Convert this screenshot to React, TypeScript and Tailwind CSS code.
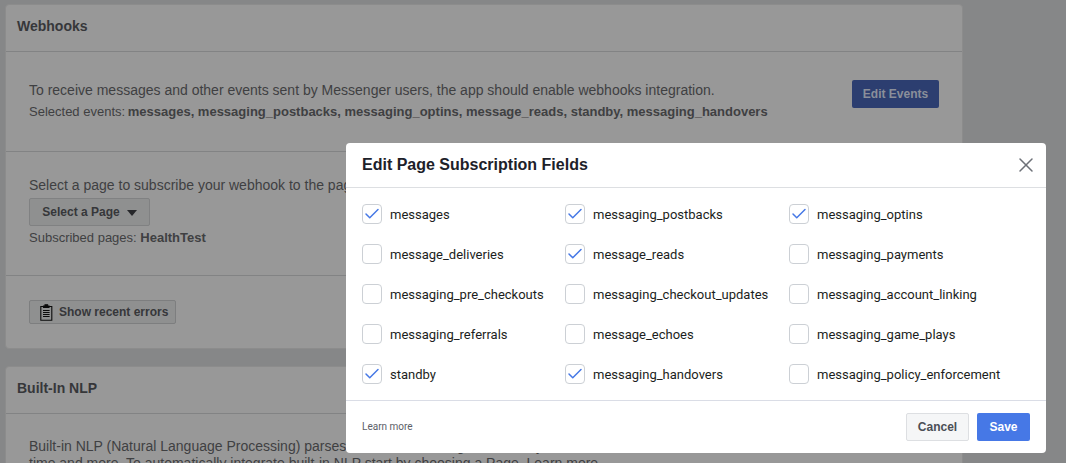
import { Check, X } from "lucide-react";

const fields = [
  { name: "messages", checked: true },
  { name: "messaging_postbacks", checked: true },
  { name: "messaging_optins", checked: true },
  { name: "message_deliveries", checked: false },
  { name: "message_reads", checked: true },
  { name: "messaging_payments", checked: false },
  { name: "messaging_pre_checkouts", checked: false },
  { name: "messaging_checkout_updates", checked: false },
  { name: "messaging_account_linking", checked: false },
  { name: "messaging_referrals", checked: false },
  { name: "message_echoes", checked: false },
  { name: "messaging_game_plays", checked: false },
  { name: "standby", checked: true },
  { name: "messaging_handovers", checked: true },
  { name: "messaging_policy_enforcement", checked: false },
];

function ClipboardIcon() {
  return (
    <svg width="13" height="17" viewBox="0 0 13 17" fill="none" stroke="#0b0b0b" strokeWidth="1.1">
      <path d="M3.5 2.5H.8v13.7h11V2.5H9" />
      <path d="M3.5 3.5V2H5V.8h2.6V2H9v1.5z" fill="#0b0b0b" />
      <path d="M3 6.5h6.6M3 8.5h6.6M3 10.5h6.6M3 12.5h6.6" />
    </svg>
  );
}

function App() {
  return (
    <div className="relative h-[463px] w-[1066px] overflow-hidden bg-[#868788] font-['Liberation_Sans',Arial,sans-serif]">
      <div className="flex flex-col gap-[17px] pl-[5px] pt-[4px] w-[963px]">
        {/* WEBHOOKS */}
        <div className="rounded-[4px] border border-[#8c8c8c] bg-[#989898] text-[#3f4042]">
          <div className="flex h-[47px] items-center border-b border-[#828384] pb-[4px] pl-[11px] text-[14px] font-bold text-[#36373a]">
            Webhooks
          </div>
          <div className="flex h-[100px] items-center justify-between border-b border-[#828384] pl-[23px] pr-[23px]">
            <div className="pb-[2px]">
              <p className="text-[14px] leading-[21px]">
                To receive messages and other events sent by Messenger users, the app should enable webhooks integration.
              </p>
              <p className="text-[13px] leading-[21px]">
                Selected events:{" "}
                <span className="-ml-[1px] font-bold">
                  messages, messaging_postbacks, messaging_optins, message_reads, standby, messaging_handovers
                </span>
              </p>
            </div>
            <button className="mb-[15px] h-[28px] w-[87px] rounded-[2px] bg-[#2c3e70] text-[12px] font-bold text-[#8a8f9a]">
              Edit Events
            </button>
          </div>
          <div className="flex h-[124px] flex-col items-start border-b border-[#828384] pl-[23px] pt-[23px]">
            <p className="text-[14px] leading-[20px]">Select a page to subscribe your webhook to the page events</p>
            <button className="mt-[3px] flex h-[28px] w-[121px] items-center justify-center gap-[7px] rounded-[2px] border border-[#808182] bg-[#8f9090] text-[12px] font-bold text-[#36373a]">
              Select a Page
              <span className="mt-[1px] h-0 w-0 border-x-[5.5px] border-t-[6px] border-x-transparent border-t-[#26272a]" />
            </button>
            <p className="mt-[3px] text-[13px] leading-[18px]">
              Subscribed pages: <span className="font-bold">HealthTest</span>
            </p>
          </div>
          <div className="h-[72px] pl-[23px] pt-[24px]">
            <button className="flex h-[24px] w-[147px] items-center gap-[6px] rounded-[2px] border border-[#7d7e7f] bg-[#8f9090] pl-[10px] text-[12px] font-bold text-[#36373a]">
              <ClipboardIcon />
              Show recent errors
            </button>
          </div>
        </div>

        {/* BUILT-IN NLP */}
        <div className="h-[200px] rounded-[4px] border border-[#8c8c8c] bg-[#989898] text-[#3f4042]">
          <div className="flex h-[47px] items-center border-b border-[#828384] pb-[4px] pl-[11px] text-[14px] font-bold text-[#36373a]">
            Built-In NLP
          </div>
          <div className="pl-[23px] pt-[24px] text-[14px] leading-[17px]">
            <p className="whitespace-nowrap">
              Built-in NLP (Natural Language Processing) parses the text of messages to identify entities such as dates,
            </p>
            <p className="whitespace-nowrap">
              time and more. To automatically integrate built-in NLP start by choosing a Page. Learn more
            </p>
          </div>
        </div>
      </div>

      {/* MODAL */}
      <div className="absolute left-[346px] top-[143px] flex h-[310px] w-[700px] flex-col rounded-[4px] bg-white font-['Roboto',sans-serif] text-[#1c1e21]">
        <div className="flex h-[45px] shrink-0 items-center justify-between border-b border-[#dddfe2] pl-[16px] pr-[8px]">
          <h2 className="font-['Liberation_Sans',Arial,sans-serif] text-[16px] font-bold text-[#1d2129]">
            Edit Page Subscription Fields
          </h2>
          <X size={24} strokeWidth={1.5} className="text-[#6d7178]" />
        </div>
        <div className="grid h-[213px] shrink-0 grid-cols-[203px_224px_1fr] grid-rows-[repeat(5,40px)] items-center border-b border-[#dadde6] pl-[16px] pt-[6px]">
          {fields.map((field) => (
            <label key={field.name} className="flex items-center gap-[8px] text-[13px]">
              <span className="flex h-[20px] w-[20px] items-center justify-center rounded-[4px] border border-[#ccd0d5] bg-white">
                {field.checked && <Check size={18} strokeWidth={2} className="text-[#4678e6]" />}
              </span>
              <span className="mt-[2px]">{field.name}</span>
            </label>
          ))}
        </div>
        <div className="flex flex-1 items-center justify-between pl-[16px] pr-[16px]">
          <a className="-mt-[2px] text-[10px] text-[#5c6068]">Learn more</a>
          <div className="flex gap-[8px]">
            <button className="h-[28px] w-[63px] rounded-[2px] border border-[#dddfe2] bg-[#f5f6f7] font-['Liberation_Sans',Arial,sans-serif] text-[12px] font-bold text-[#4b4f56]">
              Cancel
            </button>
            <button className="h-[28px] w-[53px] rounded-[2px] bg-[#4678e6] font-['Liberation_Sans',Arial,sans-serif] text-[12px] font-bold text-white">
              Save
            </button>
          </div>
        </div>
      </div>
    </div>
  );
}

export default App;
